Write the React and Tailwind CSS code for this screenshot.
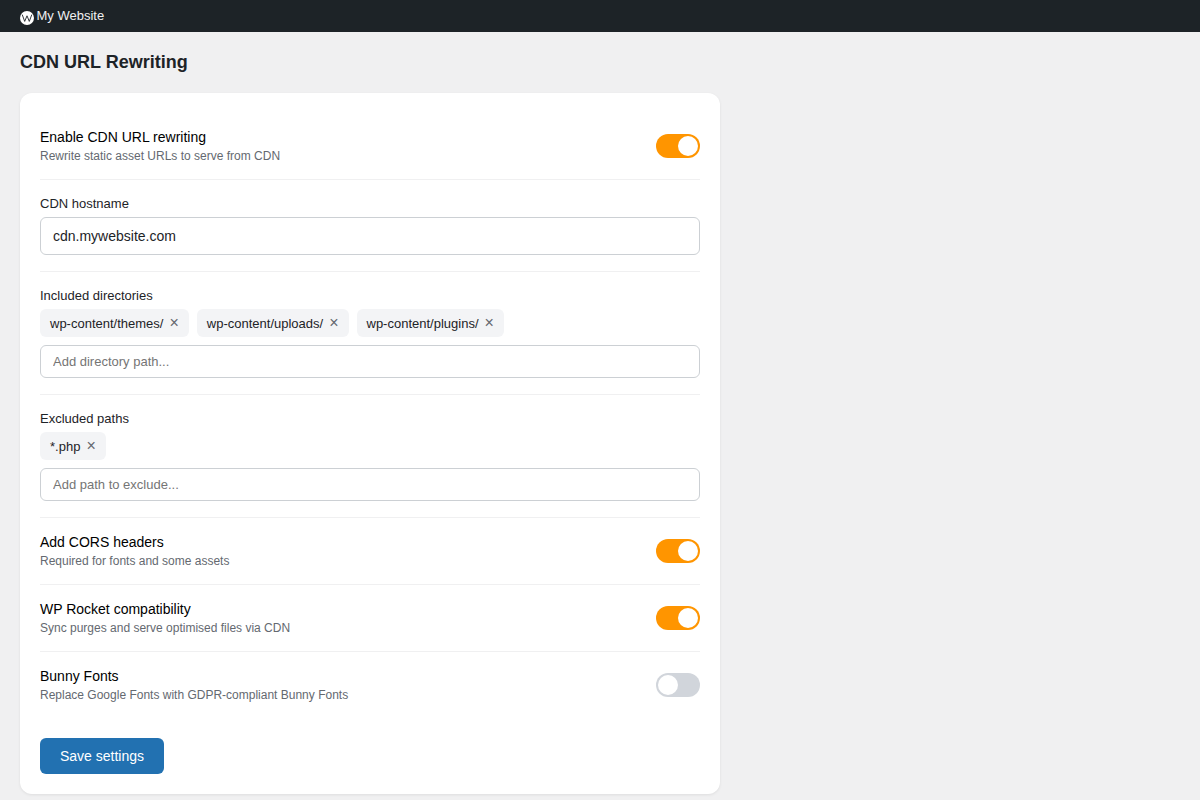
import React, { useState } from "react";

let Toggle = ({ on }) => (
  <div className={`w-[44px] h-[24px] rounded-full p-[2px] flex shrink-0 ${on ? "bg-[#ff9500] justify-end" : "bg-[#d1d5db] justify-start"}`}>
    <div className="w-[20px] h-[20px] rounded-full bg-white" />
  </div>
);

let ToggleRow = ({ title, desc, on, last }) => (
  <div className={`flex items-center justify-between py-[16px] ${last ? "" : "border-b border-[#f0f0f1]"}`}>
    <div>
      <div className="text-[14px] leading-[16px] text-black">{title}</div>
      <div className="text-[12px] leading-[14px] mt-[4px] text-[#646970]">{desc}</div>
    </div>
    <Toggle on={on} />
  </div>
);

let Tag = ({ text }) => (
  <span className="inline-flex items-center h-[28px] px-[10px] rounded-md bg-[#f3f4f6] text-[13px] text-[#1d2327]">
    <span className="mt-[2px]">{text}</span>
    <span className="ml-[6px] text-[16px] leading-[16px] mt-[-1px] text-[#646970]">×</span>
  </span>
);

let TagSection = ({ label, tags, placeholder }) => (
  <div className="py-[16px] border-b border-[#f0f0f1]">
    <div className="text-[13px] leading-[15px] mb-[6px] text-[#1d2327]">{label}</div>
    <div className="flex gap-[8px] mb-[8px]">
      {tags.map((t) => (
        <Tag key={t} text={t} />
      ))}
    </div>
    <input
      className="block w-full h-[33px] px-[12px] text-[13px] border border-[#ccd0d4] rounded-md outline-none placeholder:text-[#757575]"
      placeholder={placeholder}
    />
  </div>
);

let App = () => {
  let [hostname, setHostname] = useState("cdn.mywebsite.com");

  return (
    <div className="min-h-screen bg-[#f0f0f1] font-['Liberation_Sans',Arial,sans-serif]">
      <div className="h-[32px] bg-[#1d2327] flex items-center px-[20px] gap-[2.5px] text-[13px] text-[#f0f0f1]">
        <svg width="14" height="14" viewBox="0 0 14 14" className="mt-[3px]">
          <circle cx="7" cy="7" r="7" fill="#fff" />
          <path d="M2.2 3.6l2.5 6.8 2.3-5.6 2.3 5.6 2.5-6.8" fill="none" stroke="#1d2327" strokeWidth="0.9" />
        </svg>
        My Website
      </div>
      <div className="p-[20px]">
        <h1 className="text-[18px] leading-[21px] font-bold text-[#1d2327] mb-[20px]">CDN URL Rewriting</h1>
        <div className="w-[700px] bg-white rounded-xl shadow-[0_1px_3px_rgba(0,0,0,0.08)] p-[20px]">
          <ToggleRow title="Enable CDN URL rewriting" desc="Rewrite static asset URLs to serve from CDN" on />
          <div className="py-[16px] border-b border-[#f0f0f1]">
            <div className="text-[13px] leading-[15px] mb-[6px] text-[#1d2327]">CDN hostname</div>
            <input
              className="block w-full h-[38px] px-[12px] text-[14px] text-[#1d2327] border border-[#ccd0d4] rounded-md outline-none"
              value={hostname}
              onChange={(event) => setHostname(event.target.value)}
            />
          </div>
          <TagSection
            label="Included directories"
            tags={["wp-content/themes/", "wp-content/uploads/", "wp-content/plugins/"]}
            placeholder="Add directory path..."
          />
          <TagSection label="Excluded paths" tags={["*.php"]} placeholder="Add path to exclude..." />
          <ToggleRow title="Add CORS headers" desc="Required for fonts and some assets" on />
          <ToggleRow title="WP Rocket compatibility" desc="Sync purges and serve optimised files via CDN" on />
          <ToggleRow title="Bunny Fonts" desc="Replace Google Fonts with GDPR-compliant Bunny Fonts" last />
          <button className="mt-[20px] h-[36px] w-[124px] rounded-md bg-[#2271b1] text-white text-[14px]">Save settings</button>
        </div>
      </div>
    </div>
  );
};

export default App;
